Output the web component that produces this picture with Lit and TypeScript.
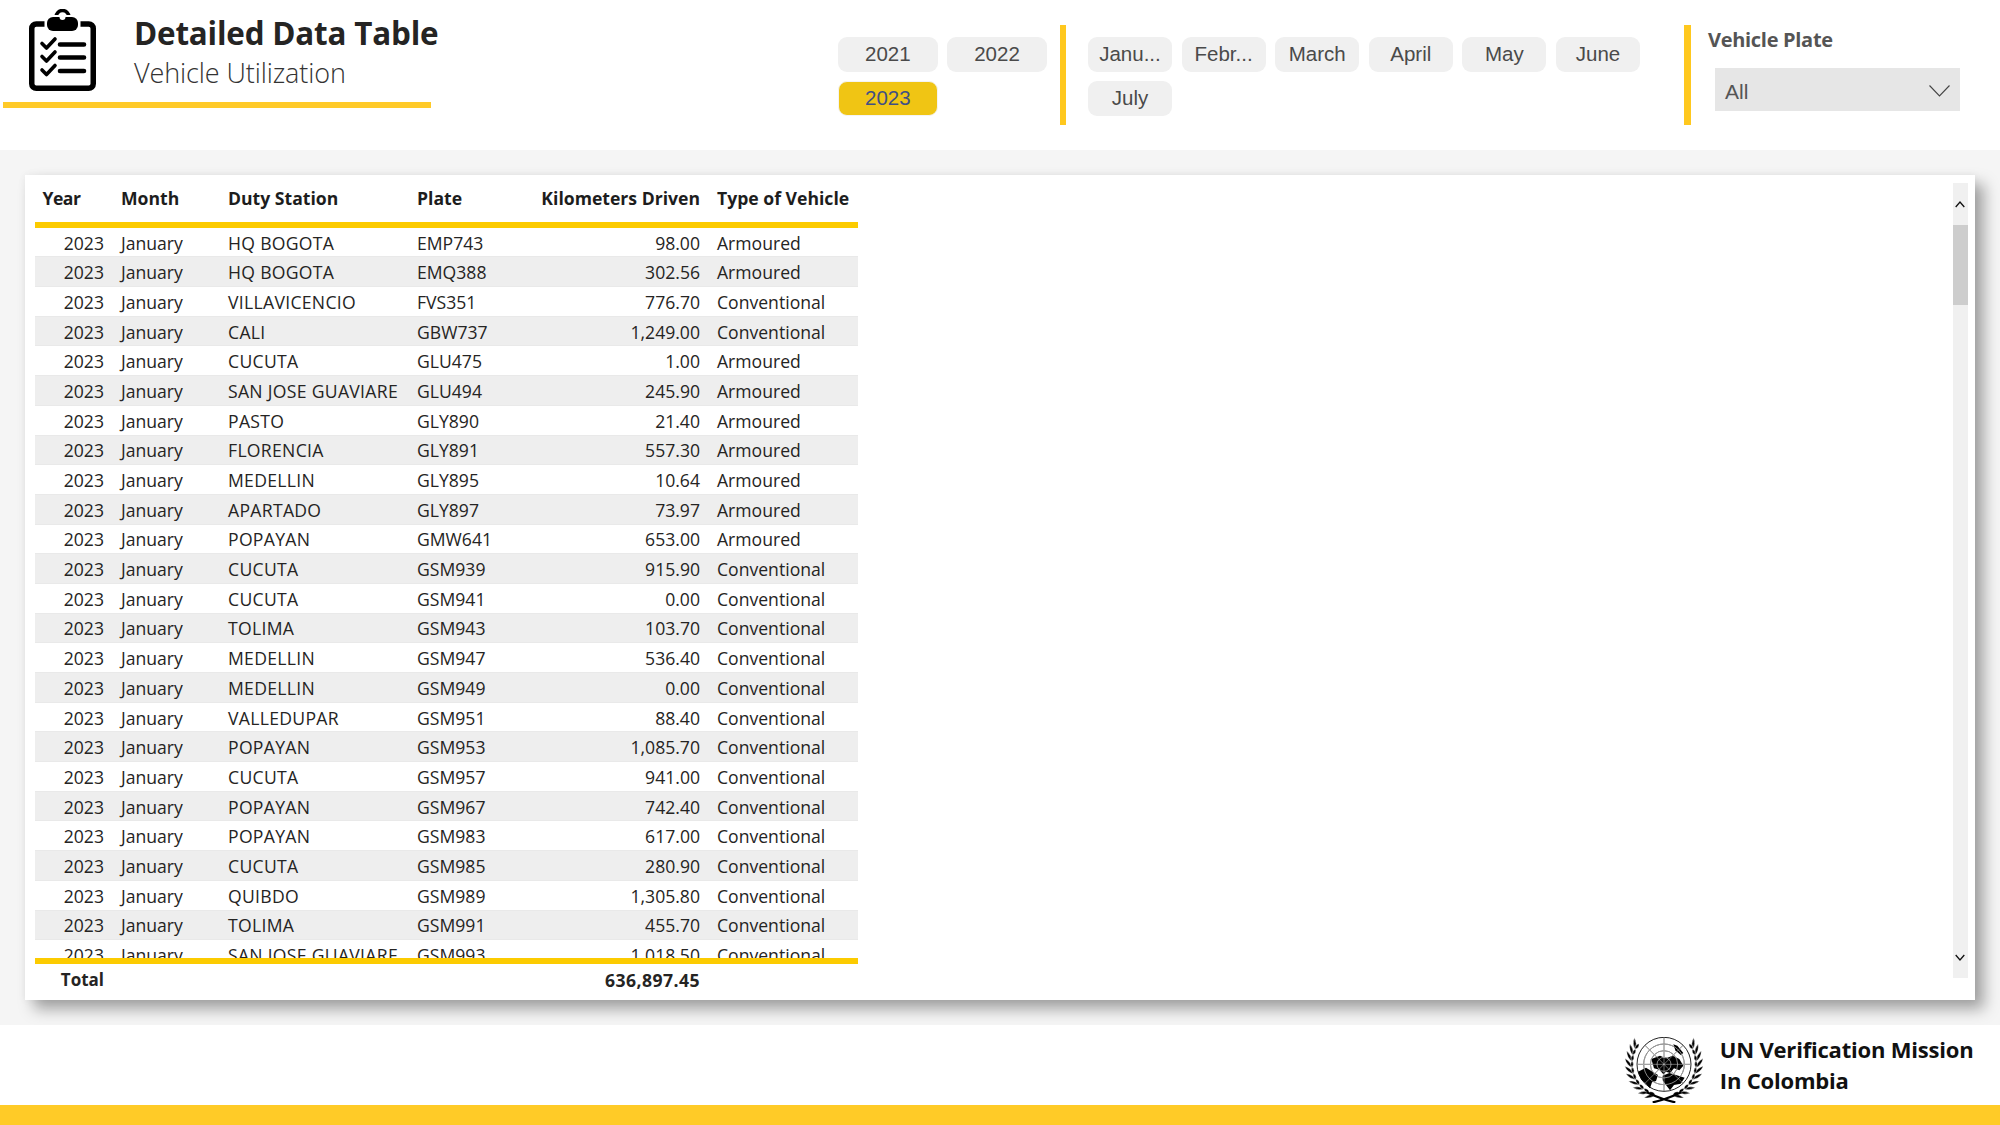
import { LitElement, html, css, svg } from "lit";
import { customElement } from "lit/decorators.js";

const ROWS: [string, string, string, string][] = [
  ["HQ BOGOTA", "EMP743", "98.00", "Armoured"],
  ["HQ BOGOTA", "EMQ388", "302.56", "Armoured"],
  ["VILLAVICENCIO", "FVS351", "776.70", "Conventional"],
  ["CALI", "GBW737", "1,249.00", "Conventional"],
  ["CUCUTA", "GLU475", "1.00", "Armoured"],
  ["SAN JOSE GUAVIARE", "GLU494", "245.90", "Armoured"],
  ["PASTO", "GLY890", "21.40", "Armoured"],
  ["FLORENCIA", "GLY891", "557.30", "Armoured"],
  ["MEDELLIN", "GLY895", "10.64", "Armoured"],
  ["APARTADO", "GLY897", "73.97", "Armoured"],
  ["POPAYAN", "GMW641", "653.00", "Armoured"],
  ["CUCUTA", "GSM939", "915.90", "Conventional"],
  ["CUCUTA", "GSM941", "0.00", "Conventional"],
  ["TOLIMA", "GSM943", "103.70", "Conventional"],
  ["MEDELLIN", "GSM947", "536.40", "Conventional"],
  ["MEDELLIN", "GSM949", "0.00", "Conventional"],
  ["VALLEDUPAR", "GSM951", "88.40", "Conventional"],
  ["POPAYAN", "GSM953", "1,085.70", "Conventional"],
  ["CUCUTA", "GSM957", "941.00", "Conventional"],
  ["POPAYAN", "GSM967", "742.40", "Conventional"],
  ["POPAYAN", "GSM983", "617.00", "Conventional"],
  ["CUCUTA", "GSM985", "280.90", "Conventional"],
  ["QUIBDO", "GSM989", "1,305.80", "Conventional"],
  ["TOLIMA", "GSM991", "455.70", "Conventional"],
  ["SAN JOSE GUAVIARE", "GSM993", "1,018.50", "Conventional"],
];

function wreathLeaves() {
  const cx = 198, cy = 122;
  const out = [];
  for (const side of [-1, 1]) {
    for (let i = 0; i < 10; i++) {
      const deg = 16 + i * 11.2;
      const a = (deg * Math.PI) / 180;
      const r = 97;
      const x = cx + side * r * Math.sin(a);
      const y = cy + r * Math.cos(a);
      const tx = side * Math.cos(a);
      const ty = -Math.sin(a);
      const nx = side * Math.sin(a);
      const ny = Math.cos(a);
      for (const k of [1, -1]) {
        const len = k > 0 ? 34 : 20;
        const tilt = k > 0 ? 0.6 : -0.15;
        const dx = tx + nx * tilt;
        const dy = ty + ny * tilt;
        const m = Math.hypot(dx, dy);
        const ux = dx / m, uy = dy / m;
        const ex = x + ux * len, ey = y + uy * len;
        const w = 8.5;
        const mx = x + ux * len * 0.45, my = y + uy * len * 0.45;
        out.push(
          svg`<path d="M${x.toFixed(1)} ${y.toFixed(1)} Q${(mx - uy * w).toFixed(1)} ${(my + ux * w).toFixed(1)} ${ex.toFixed(1)} ${ey.toFixed(1)} Q${(mx + uy * w).toFixed(1)} ${(my - ux * w).toFixed(1)} ${x.toFixed(1)} ${y.toFixed(1)}Z" fill="#000" stroke="#fff" stroke-width="1.2"/>`
        );
      }
    }
  }
  return out;
}

function spokes(color: string, width: number) {
  const out = [];
  for (let i = 0; i < 8; i++) {
    const a = (i * Math.PI) / 4;
    out.push(
      svg`<line x1="198" y1="124" x2="${(198 + 81 * Math.cos(a)).toFixed(1)}" y2="${(124 + 81 * Math.sin(a)).toFixed(1)}" stroke="${color}" stroke-width="${width}"/>`
    );
  }
  return out;
}

@customElement("app-root")
export class AppRoot extends LitElement {
  static styles = css`
    :host {
      display: flex;
      flex-direction: column;
      width: 2000px;
      height: 1125px;
      background: #fff;
      font-family: "Open Sans", "Liberation Sans", sans-serif;
      overflow: hidden;
    }
    .header {
      height: 150px;
      flex: none;
      display: flex;
      align-items: flex-start;
    }
    .brand {
      margin-left: 3px;
      width: 428px;
      height: 108px;
      display: flex;
      flex-direction: column;
      flex: none;
    }
    .brand-row {
      flex: 1;
      display: flex;
      padding: 9px 0 0 26px;
      box-sizing: border-box;
    }
    .clip {
      width: 67px;
      height: 82px;
      flex: none;
      display: block;
    }
    .titles {
      margin-left: 38px;
      display: flex;
      flex-direction: column;
    }
    .title {
      font-size: 31.4px;
      font-weight: 700;
      line-height: 44px;
      margin-top: 2px;
      color: #252423;
      white-space: nowrap;
      letter-spacing: -0.2px;
    }
    .subtitle {
      font-size: 27px;
      font-weight: 300;
      line-height: 36px;
      margin-top: 0;
      color: #333;
      white-space: nowrap;
      letter-spacing: -0.1px;
    }
    .underline {
      height: 6px;
      background: #ffca28;
      flex: none;
    }
    .slicers {
      margin-left: 407px;
      display: flex;
      margin-top: 25px;
    }
    .chips {
      display: flex;
      flex-wrap: wrap;
      align-content: flex-start;
      gap: 9px 9.6px;
      padding-top: 12px;
      box-sizing: border-box;
    }
    .years { width: 209px; margin-right: 12.5px; }
    .months { width: 560px; margin: 0 36px 0 22px; }
    .chip {
      height: 35px;
      padding-bottom: 1.5px;
      background: #f0f0f0;
      border-radius: 9px;
      display: flex;
      align-items: center;
      justify-content: center;
      font-family: "Liberation Sans", Arial, sans-serif;
      font-size: 20.5px;
      color: #4a4a4a;
      box-sizing: border-box;
    }
    .years .chip { width: 99.6px; }
    .months .chip { width: 84px; }
    .chip.sel {
      background: #f0c514;
      color: #3f4f85;
      border: 1.5px solid #f4f4f4;
    }
    .rule {
      width: 6.5px;
      height: 100px;
      background: #ffc81e;
      flex: none;
    }
    .plate { margin-left: 17.5px; width: 252px; flex: none; }
    .plate-label {
      font-size: 20px;
      font-weight: 700;
      line-height: 30px;
      color: #555;
      letter-spacing: -0.3px;
    }
    .dropdown {
      margin: 13px 0 0 7px;
      width: 244.5px;
      height: 43px;
      background: #e6e6e6;
      display: flex;
      align-items: center;
      justify-content: space-between;
      padding: 0 9.5px 0 10px;
      box-sizing: border-box;
      font-family: "Liberation Sans", Arial, sans-serif;
      font-size: 21px;
      color: #555;
    }
    .dropdown span { margin-top: 5px; }
    .dropdown svg { display: block; margin-top: 3px; }
    .band {
      height: 875px;
      flex: none;
      background: #f5f5f5;
      padding: 25px;
      box-sizing: border-box;
      overflow: hidden;
    }
    .card {
      width: 1950px;
      height: 825px;
      background: #fff;
      box-shadow: 9px 9px 14px rgba(0, 0, 0, 0.34), 0 0 8px rgba(0, 0, 0, 0.05);
      display: flex;
      justify-content: space-between;
      padding: 0 7.5px 0 9.5px;
      box-sizing: border-box;
    }
    .table {
      width: 823px;
      display: flex;
      flex-direction: column;
      flex: none;
      color: #252423;
      font-size: 17.6px;
    }
    .row {
      display: grid;
      grid-template-columns: 77.5px 107px 189px 112px 188px 149.5px;
      align-items: center;
      white-space: nowrap;
    }
    .head {
      height: 52.7px;
      flex: none;
      border-bottom: 6px solid #fccb00;
      box-sizing: border-box;
      font-weight: 700;
      color: #1d1d1d;
      font-size: 17.6px;
    }
    .body {
      height: 730.6px;
      overflow: hidden;
      flex: none;
    }
    .data {
      height: 29.7px;
      padding-top: 1px;
      box-sizing: border-box;
      border-bottom: 1px solid #e9e9e9;
      background: #fff;
      color: #252423;
    }
    .data.even { background: #eeeeee; }
    .cell { padding: 0 8px 0 9px; overflow: hidden; }
    .cell.num { text-align: right; padding: 0 8px 0 0; }
    .cell.first { padding-left: 8px; letter-spacing: -0.5px; }
    .caps { letter-spacing: 0.3px; }
    .total {
      border-top: 6px solid #fccb00;
      height: 41.7px;
      padding-bottom: 5px;
      box-sizing: border-box;
      flex: none;
      font-weight: 700;
      color: #252423;
    }
    .total-label { font-size: 17px; }
    .total-num { letter-spacing: 0.45px; }
    .scroll {
      width: 14.5px;
      height: 795px;
      margin-top: 8px;
      background: #f0f0f0;
      flex: none;
      display: flex;
      flex-direction: column;
    }
    .arrow {
      height: 42px;
      flex: none;
      display: flex;
      align-items: center;
      justify-content: center;
    }
    .thumb { height: 80px; background: #cdcdcd; flex: none; }
    .gap { flex: 1; }
    .footer {
      height: 80px;
      flex: none;
      display: flex;
      align-items: center;
      justify-content: flex-end;
      padding-right: 26.5px;
      box-sizing: border-box;
    }
    .emblem { display: block; width: 79px; height: 66px; margin: 9px 16.5px 0 0; }
    .org {
      font-weight: 700;
      font-size: 22px;
      line-height: 31px;
      color: #111;
      white-space: nowrap;
      letter-spacing: -0.2px;
      margin-top: -1px;
    }
    .stripe { height: 20px; flex: none; background: #ffcb27; }
  `;

  private clipboard() {
    return html`<svg class="clip" viewBox="0 0 67 82">
      <rect x="2.75" y="15" width="61.5" height="64.25" rx="4.5" fill="#fff" stroke="#000" stroke-width="5.5"/>
      <circle cx="33.5" cy="8" r="6.5" fill="#fff" stroke="#000" stroke-width="3.5"/>
      <rect x="15.5" y="6" width="36" height="19" rx="4" fill="#fff"/>
      <rect x="18" y="8" width="31" height="14" rx="6" fill="#000"/>
      <circle cx="33.5" cy="8" r="3" fill="#fff"/>
      <g fill="none" stroke="#000" stroke-linecap="round">
        <path d="M31 35.5H55M31 48.5H55M31 62H55" stroke-width="4.6"/>
        <path d="M13 34.5l4.5 4.5 8.5-9M13 47.5l4.5 4.5 8.5-9M13 61l4.5 4.5 8.5-9" stroke-width="3.6" stroke-linejoin="round"/>
      </g>
    </svg>`;
  }

  private emblem() {
    return html`<svg class="emblem" viewBox="78 42 237 198">
      ${wreathLeaves()}
      <path d="M146 208 Q198 232 232 238 M250 208 Q198 232 164 238" fill="none" stroke="#000" stroke-width="6.5"/>
      <g fill="none" stroke="#000" stroke-width="2.6">
        <circle cx="198" cy="124" r="81" fill="#fff"/>
        <circle cx="198" cy="124" r="61"/>
        <circle cx="198" cy="124" r="41"/>
        <circle cx="198" cy="124" r="21"/>
      </g>
      ${spokes("#000", 2)}
      <g fill="#000">
        <path d="M160 108 L186 98 L204 106 L224 98 L244 108 L256 128 L244 142 L228 136 L216 150 L204 146 L196 154 L184 140 L168 136Z"/>
        <path d="M120 146 L144 134 L160 144 L180 156 L174 174 L162 178 L156 196 L144 182 L130 170Z"/>
        <path d="M194 158 L214 150 L234 156 L260 164 L248 182 L228 186 L216 202 L204 186 L194 172Z"/>
        <path d="M226 64 L238 68 L256 90 L248 96 L232 82Z"/>
      </g>
      <g fill="none" stroke="#fff" stroke-width="1.6">
        <circle cx="198" cy="124" r="21"/>
        <circle cx="198" cy="124" r="41"/>
        <circle cx="198" cy="124" r="61"/>
      </g>
      ${spokes("#fff", 1.2)}
    </svg>`;
  }

  render() {
    const years = ["2021", "2022", "2023"];
    const months = ["Janu...", "Febr...", "March", "April", "May", "June", "July"];
    return html`
      <div class="header">
        <div class="brand">
          <div class="brand-row">
            ${this.clipboard()}
            <div class="titles">
              <div class="title">Detailed Data Table</div>
              <div class="subtitle">Vehicle Utilization</div>
            </div>
          </div>
          <div class="underline"></div>
        </div>
        <div class="slicers">
          <div class="chips years">
            ${years.map((y) => html`<div class="chip ${y === "2023" ? "sel" : ""}">${y}</div>`)}
          </div>
          <div class="rule"></div>
          <div class="chips months">
            ${months.map((m) => html`<div class="chip">${m}</div>`)}
          </div>
          <div class="rule"></div>
          <div class="plate">
            <div class="plate-label">Vehicle Plate</div>
            <div class="dropdown">
              <span>All</span>
              <svg width="21" height="12" viewBox="0 0 21 12"><path d="M0.5 0.5L10.5 11L20.5 0.5" fill="none" stroke="#444" stroke-width="1.1"/></svg>
            </div>
          </div>
        </div>
      </div>
      <div class="band">
        <div class="card">
          <div class="table">
            <div class="row head">
              <div class="cell first">Year</div>
              <div class="cell">Month</div>
              <div class="cell">Duty Station</div>
              <div class="cell">Plate</div>
              <div class="cell num">Kilometers Driven</div>
              <div class="cell">Type of Vehicle</div>
            </div>
            <div class="body">
              ${ROWS.map(
                (r, i) => html`<div class="row data ${i % 2 ? "even" : ""}">
                  <div class="cell num">2023</div>
                  <div class="cell">January</div>
                  <div class="cell caps">${r[0]}</div>
                  <div class="cell">${r[1]}</div>
                  <div class="cell num">${r[2]}</div>
                  <div class="cell">${r[3]}</div>
                </div>`
              )}
            </div>
            <div class="row total">
              <div class="cell num total-label">Total</div>
              <div class="cell"></div>
              <div class="cell"></div>
              <div class="cell"></div>
              <div class="cell num total-num">636,897.45</div>
              <div class="cell"></div>
            </div>
          </div>
          <div class="scroll">
            <div class="arrow"><svg width="10" height="7" viewBox="0 0 10 7"><path d="M0.7 6L5 1L9.3 6" fill="none" stroke="#111" stroke-width="1.3"/></svg></div>
            <div class="thumb"></div>
            <div class="gap"></div>
            <div class="arrow"><svg width="10" height="7" viewBox="0 0 10 7"><path d="M0.7 1L5 6L9.3 1" fill="none" stroke="#111" stroke-width="1.3"/></svg></div>
          </div>
        </div>
      </div>
      <div class="footer">
        ${this.emblem()}
        <div class="org">UN Verification Mission<br />In Colombia</div>
      </div>
      <div class="stripe"></div>
    `;
  }
}
